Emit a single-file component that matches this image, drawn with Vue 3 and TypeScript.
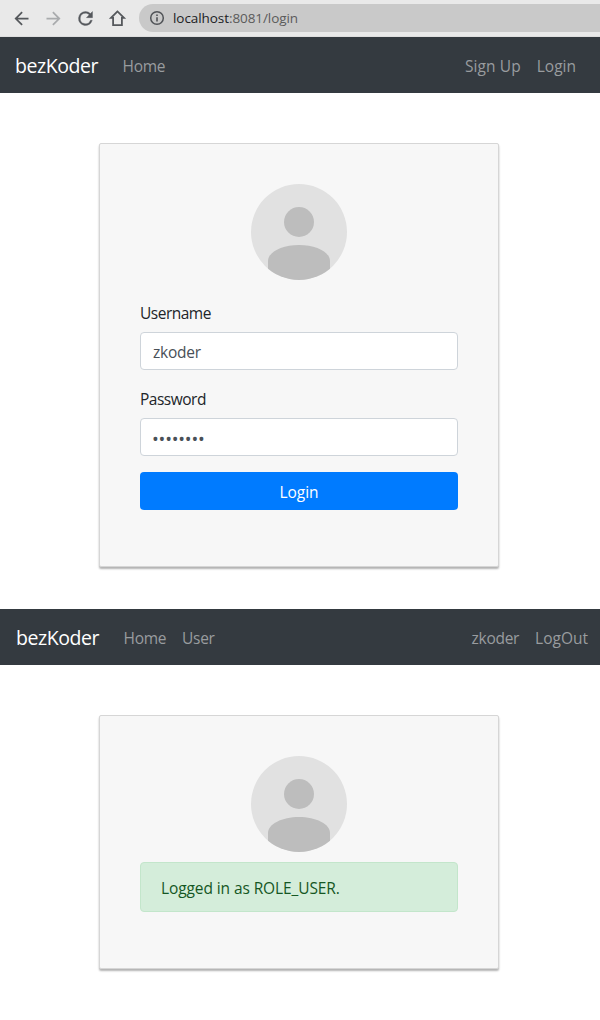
<script setup lang="ts">
import { ref } from 'vue'

const username = ref<string>('zkoder')
const password = ref<string>('12345678')
const role: string = 'ROLE_USER'
</script>

<template>
  <div class="page">
    <header class="toolbar">
      <svg class="tool" viewBox="0 0 24 24"><path d="M20 11H7.83l5.59-5.59L12 4l-8 8 8 8 1.41-1.41L7.83 13H20z" /></svg>
      <svg class="tool disabled" viewBox="0 0 24 24"><path d="M12 4l-1.41 1.41L16.17 11H4v2h12.17l-5.58 5.59L12 20l8-8z" /></svg>
      <svg class="tool reload" viewBox="0 0 24 24"><path d="M17.65 6.35A7.96 7.96 0 0 0 12 4a8 8 0 1 0 7.73 10h-2.08A6 6 0 1 1 12 6c1.66 0 3.14.69 4.22 1.78L13 11h7V4z" /></svg>
      <svg class="tool" viewBox="0 0 21 21"><path d="M10.5 3.4L4 9.9h2.1v7.2h8.8V9.9H17z" fill="none" stroke="#55585c" stroke-width="1.8" /></svg>
      <div class="address">
        <svg class="info" viewBox="0 0 16 16">
          <circle cx="8" cy="8" r="6.3" fill="none" stroke="#505357" stroke-width="1.5" />
          <path d="M7.2 7.2h1.6v4.2H7.2zM7.2 4.5h1.6v1.6H7.2z" fill="#505357" />
        </svg>
        <span class="url"><b>localhost</b>:8081/login</span>
      </div>
    </header>

    <nav class="navbar guest">
      <a class="brand">bezKoder</a>
      <a class="link tight">Home</a>
      <a class="link push wide">Sign Up</a>
      <a class="link">Login</a>
    </nav>

    <main class="card login-card">
      <svg class="avatar" viewBox="0 0 96 96">
        <defs><clipPath id="disc-login"><circle cx="48" cy="48" r="48" /></clipPath></defs>
        <circle cx="48" cy="48" r="48" fill="#e1e1e1" />
        <g clip-path="url(#disc-login)" fill="#bdbdbd">
          <circle cx="48" cy="38" r="15" />
          <path d="M17 96V77C17 68 31 61 48 61s31 7 31 16v19z" />
        </g>
      </svg>
      <form class="form" @submit.prevent>
        <label class="label" for="username">Username</label>
        <input id="username" v-model="username" class="field" type="text" />
        <label class="label" for="password">Password</label>
        <input id="password" v-model="password" class="field secret" type="password" />
        <button class="submit" type="submit">Login</button>
      </form>
    </main>

    <nav class="navbar member">
      <a class="brand">bezKoder</a>
      <a class="link tight">Home</a>
      <a class="link tight">User</a>
      <a class="link push tight">zkoder</a>
      <a class="link">LogOut</a>
    </nav>

    <section class="card status-card">
      <svg class="avatar" viewBox="0 0 96 96">
        <defs><clipPath id="disc-status"><circle cx="48" cy="48" r="48" /></clipPath></defs>
        <circle cx="48" cy="48" r="48" fill="#e1e1e1" />
        <g clip-path="url(#disc-status)" fill="#bdbdbd">
          <circle cx="48" cy="38" r="15" />
          <path d="M17 96V77C17 68 31 61 48 61s31 7 31 16v19z" />
        </g>
      </svg>
      <div class="alert">Logged in as {{ role }}.</div>
    </section>
  </div>
</template>

<style>
body {
  margin: 0;
  background: #fff;
}
</style>

<style scoped>
.page {
  width: 600px;
  height: 1020px;
  overflow: hidden;
  background: #fff;
  color: #212529;
  font-family: "Open Sans", "Noto Sans", sans-serif;
  font-size: 15.5px;
  line-height: 24px;
}
.page * {
  box-sizing: border-box;
}
.toolbar {
  display: flex;
  align-items: center;
  height: 37px;
  padding-left: 10.5px;
  background: #e9e9e9;
  border-bottom: 1px solid #dedede;
}
.tool {
  width: 21px;
  height: 21px;
  margin-right: 11px;
  flex: none;
  fill: #55585c;
}
.reload {
  stroke: #55585c;
  stroke-width: 0.4;
}
.disabled {
  fill: #a9abad;
}
.address {
  display: flex;
  align-items: center;
  flex: 1;
  height: 28px;
  margin-left: 0.5px;
  padding-left: 10px;
  background: #c9c9c9;
  border-radius: 14px 0 0 14px;
}
.info {
  width: 16px;
  height: 16px;
  margin-right: 8px;
}
.url {
  color: #5b5b5b;
  font-size: 13.5px;
  letter-spacing: -0.07px;
}
.url b {
  color: #202124;
  font-weight: 400;
}
.navbar {
  display: flex;
  align-items: center;
  height: 56px;
  padding: 2px 16px 0 15px;
  background: #343a40;
}
.brand {
  width: 83.5px;
  margin-right: 16px;
  color: #fff;
  font-size: 19.5px;
  letter-spacing: -0.45px;
  white-space: nowrap;
}
.link {
  padding: 0 8px;
  color: #999c9f;
  white-space: nowrap;
}
.tight {
  letter-spacing: -0.3px;
}
.wide {
  letter-spacing: 0.1px;
}
.push {
  margin-left: auto;
}
.member {
  margin-top: 42px;
  padding: 2px 4px 0 16px;
}
.card {
  display: flex;
  flex-direction: column;
  width: 400px;
  margin: 50px 0 0 99px;
  padding: 40px;
  background: #f7f7f7;
  border: 1px solid #d6d6d6;
  border-radius: 2px;
  box-shadow: 0 2px 2px rgba(0, 0, 0, 0.3);
}
.login-card {
  height: 424px;
}
.status-card {
  height: 254px;
}
.avatar {
  width: 96px;
  height: 96px;
  align-self: center;
  flex: none;
}
.form {
  display: flex;
  flex-direction: column;
  margin-top: 20px;
}
.label {
  height: 24px;
  margin-bottom: 8px;
  line-height: 26px;
  letter-spacing: -0.5px;
}
.field {
  height: 38px;
  margin: 0 0 16px;
  padding: 2px 12px 0;
  border: 1px solid #ced4da;
  border-radius: 4px;
  background: #fff;
  color: #495057;
  font: 15.5px "Open Sans", "Noto Sans", sans-serif;
  letter-spacing: -0.25px;
  outline: none;
}
.secret {
  padding-top: 4px;
  padding-left: 11px;
  font-size: 18px;
  letter-spacing: -0.2px;
}
.submit {
  height: 38px;
  padding: 1px 0 0;
  border: 0;
  border-radius: 4px;
  background: #007bff;
  color: #fff;
  font: 15.5px "Open Sans", "Noto Sans", sans-serif;
}
.alert {
  height: 50px;
  margin-top: 10px;
  padding: 13px 20px 11px;
  border: 1px solid #c3e6cb;
  border-radius: 4px;
  background: #d4edda;
  color: #155724;
  letter-spacing: -0.1px;
}
</style>
